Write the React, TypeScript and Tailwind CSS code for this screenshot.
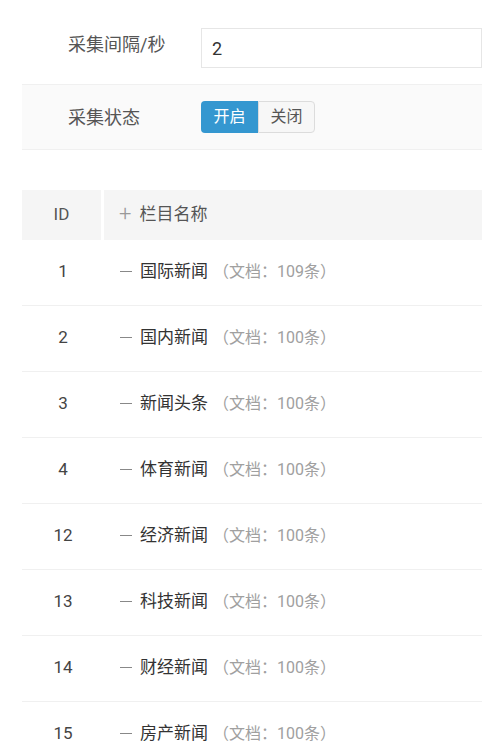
const rows = [
  { id: 1, name: "国际新闻", count: 109 },
  { id: 2, name: "国内新闻", count: 100 },
  { id: 3, name: "新闻头条", count: 100 },
  { id: 4, name: "体育新闻", count: 100 },
  { id: 12, name: "经济新闻", count: 100 },
  { id: 13, name: "科技新闻", count: 100 },
  { id: 14, name: "财经新闻", count: 100 },
  { id: 15, name: "房产新闻", count: 100 },
];

export default function App() {
  return (
    <div
      className="w-[488px] h-[744px] overflow-hidden bg-white"
      style={{ fontFamily: 'Roboto, "Noto Sans CJK SC", sans-serif' }}
    >
      <div className="ml-[22px] w-[460px]">
        {/* settings form */}
        <div className="flex items-center h-[84px] pt-[12px]">
          <div className="w-[179px] pl-[46px] text-[18px] text-[#555] -mt-[8px]">采集间隔/秒</div>
          <input
            defaultValue="2"
            className="h-[40px] flex-1 border border-[#e6e6e6] px-[10px] text-[18px] text-[#333] outline-none"
          />
        </div>
        <div className="flex items-center h-[66px] bg-[#fafafa] border-y border-[#f0f0f0]">
          <div className="w-[179px] pl-[46px] text-[18px] text-[#555]">采集状态</div>
          <div className="flex h-[32px] text-[16px]">
            <button className="w-[57px] rounded-l-[4px] bg-[#3497d0] text-white">开启</button>
            <button className="w-[57px] rounded-r-[4px] border border-[#dcdcdc] bg-[#f7f7f7] text-[#555]">
              关闭
            </button>
          </div>
        </div>

        {/* column table */}
        <div className="mt-[40px]">
          <div className="flex h-[50px] gap-[3px] text-[#555]">
            <div className="w-[79px] bg-[#f5f5f5] flex items-center justify-center text-[17px]">ID</div>
            <div className="flex-1 bg-[#f5f5f5] flex items-center pl-[15px] gap-[8px]">
              <span className="text-[#999] text-[22px] font-light leading-none -mt-[2px]">+</span>
              <span className="text-[17px]">栏目名称</span>
            </div>
          </div>
          {rows.map((r) => (
            <div key={r.id} className="flex h-[66px] pb-[2px] items-center border-b border-[#f0f0f0]">
              <div className="w-[82px] text-center text-[17px] text-[#444]">{r.id}</div>
              <div className="flex items-center pl-[16px]">
                <span className="w-[12px] h-[1.5px] bg-[#888] mr-[8px]" />
                <span className="text-[17px] text-[#333]">{r.name}</span>
                <span className="ml-[5px] text-[16px] text-[#a0a0a0]">（文档：{r.count}条）</span>
              </div>
            </div>
          ))}
        </div>
      </div>
    </div>
  );
}
